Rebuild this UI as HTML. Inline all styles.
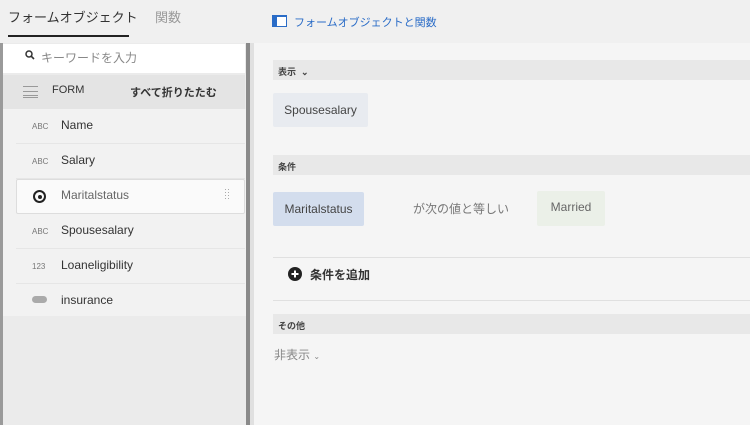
<!DOCTYPE html>
<html><head><meta charset="utf-8"><style>
*{margin:0;padding:0;box-sizing:border-box}
body{width:750px;height:425px;overflow:hidden;background:#f0f0f0;font-family:"Liberation Sans","Noto Sans CJK JP",sans-serif;position:relative;color:#333}
.a{position:absolute}
.row{position:absolute;left:16px;width:229px;height:35px;border-bottom:1px solid #e6e6e6;font-size:12px;color:#333}
.row .ic{position:absolute;left:16px;top:13px;font-size:8px;color:#777;width:22px}
.row .t{position:absolute;left:45px;top:9px}
.hdr{position:absolute;left:273px;right:0;height:20px;background:#e8e8e8;font-size:9px;font-weight:bold;color:#444;padding:5px 0 0 5px}
.chip{position:absolute;font-size:12px;color:#444;text-align:center;border-radius:2px}
</style></head><body>
<div class="a" style="left:8px;top:7px;font-size:13px;color:#333">フォームオブジェクト</div>
<div class="a" style="left:155px;top:7px;font-size:13px;color:#999">関数</div>
<div class="a" style="left:8px;top:35px;width:121px;height:2px;background:#222"></div>
<svg class="a" style="left:272px;top:15px" width="15" height="12"><rect x="0.5" y="0.5" width="14" height="11" fill="#fff" stroke="#2a6cc7"/><rect x="0" y="0" width="5" height="12" fill="#2a6cc7"/><rect x="0" y="0" width="15" height="2" fill="#2a6cc7"/></svg>
<div class="a" style="left:294px;top:14px;font-size:11px;color:#2a6cc7">フォームオブジェクトと関数</div>
<div class="a" style="left:0;top:43px;width:3px;height:382px;background:#9a9a9a"></div>
<div class="a" style="left:3px;top:43px;width:243px;height:382px;background:#ebebeb"></div>
<div class="a" style="left:3px;top:109px;width:243px;height:207px;background:#f2f2f2"></div>
<div class="a" style="left:246px;top:43px;width:4px;height:382px;background:#8a8a8a"></div>
<div class="a" style="left:250px;top:43px;width:4px;height:382px;background:#e0e0e0"></div>
<div class="a" style="left:254px;top:43px;width:496px;height:382px;background:#f5f5f5"></div>
<div class="a" style="left:3px;top:44px;width:242px;height:29px;background:#fff"></div>
<svg class="a" style="left:25px;top:50px" width="10" height="10"><circle cx="4" cy="4" r="3" fill="none" stroke="#333" stroke-width="1.5"/><line x1="6.2" y1="6.2" x2="9" y2="9" stroke="#333" stroke-width="1.6"/></svg>
<div class="a" style="left:41px;top:49px;font-size:12px;color:#888">キーワードを入力</div>
<div class="a" style="left:3px;top:75px;width:242px;height:34px;background:#e4e4e4"></div>
<div class="a" style="left:23px;top:86px;width:15px;height:12px;border-top:1px solid #999;border-bottom:1px solid #999"></div>
<div class="a" style="left:23px;top:91px;width:15px;height:1px;background:#999"></div>
<div class="a" style="left:23px;top:95px;width:15px;height:1px;background:#999"></div>
<div class="a" style="left:52px;top:84px;font-size:11px;color:#333">FORM</div>
<div class="a" style="left:130px;top:84px;font-size:11px;font-weight:bold;color:#333">すべて折りたたむ</div>
<div class="row" style="top:109px"><span class="ic">ABC</span><span class="t">Name</span></div>
<div class="row" style="top:144px"><span class="ic">ABC</span><span class="t">Salary</span></div>
<div class="row" style="top:179px;background:#fafafa;border:1px solid #ddd;border-radius:2px"><span style="position:absolute;left:16px;top:10px;width:13px;height:13px;border:2.5px solid #222;border-radius:50%"></span><span style="position:absolute;left:20.5px;top:14.5px;width:4px;height:4px;background:#222;border-radius:50%"></span><span class="t" style="color:#666;left:44px;top:8px">Maritalstatus</span><svg style="position:absolute;left:208px;top:9px" width="5" height="10"><g fill="#aaa"><rect x="0" y="0" width="1" height="1"/><rect x="3" y="0" width="1" height="1"/><rect x="0" y="3" width="1" height="1"/><rect x="3" y="3" width="1" height="1"/><rect x="0" y="6" width="1" height="1"/><rect x="3" y="6" width="1" height="1"/><rect x="0" y="9" width="1" height="1"/><rect x="3" y="9" width="1" height="1"/></g></svg></div>
<div class="row" style="top:214px"><span class="ic">ABC</span><span class="t">Spousesalary</span></div>
<div class="row" style="top:249px"><span class="ic">123</span><span class="t">Loaneligibility</span></div>
<div class="row" style="top:284px;border:none"><span style="position:absolute;left:16px;top:12px;width:15px;height:7px;background:#aaa;border-radius:4px"></span><span class="t">insurance</span></div>
<div class="hdr" style="top:60px">表示 &nbsp;⌄</div>
<div class="chip" style="left:273px;top:93px;width:95px;height:34px;background:#e8ebf0;padding-top:10px">Spousesalary</div>
<div class="hdr" style="top:155px">条件</div>
<div class="chip" style="left:273px;top:192px;width:91px;height:34px;background:#d3dded;padding-top:10px">Maritalstatus</div>
<div class="a" style="left:413px;top:200px;font-size:12px;color:#777">が次の値と等しい</div>
<div class="chip" style="left:537px;top:191px;width:68px;height:35px;background:#ebf0e8;padding-top:9px;color:#666">Married</div>
<div class="a" style="left:273px;top:257px;width:477px;height:1px;background:#e0e0e0"></div>
<svg class="a" style="left:288px;top:267px" width="14" height="14"><circle cx="7" cy="7" r="7" fill="#222"/><rect x="3.5" y="6" width="7" height="2" fill="#fff"/><rect x="6" y="3.5" width="2" height="7" fill="#fff"/></svg>
<div class="a" style="left:310px;top:266px;font-size:12px;font-weight:bold;color:#333">条件を追加</div>
<div class="a" style="left:273px;top:300px;width:477px;height:1px;background:#e0e0e0"></div>
<div class="hdr" style="top:314px">その他</div>
<div class="a" style="left:274px;top:346px;font-size:12px;color:#888">非表示 <span style="font-size:8px">⌄</span></div>
</body></html>
